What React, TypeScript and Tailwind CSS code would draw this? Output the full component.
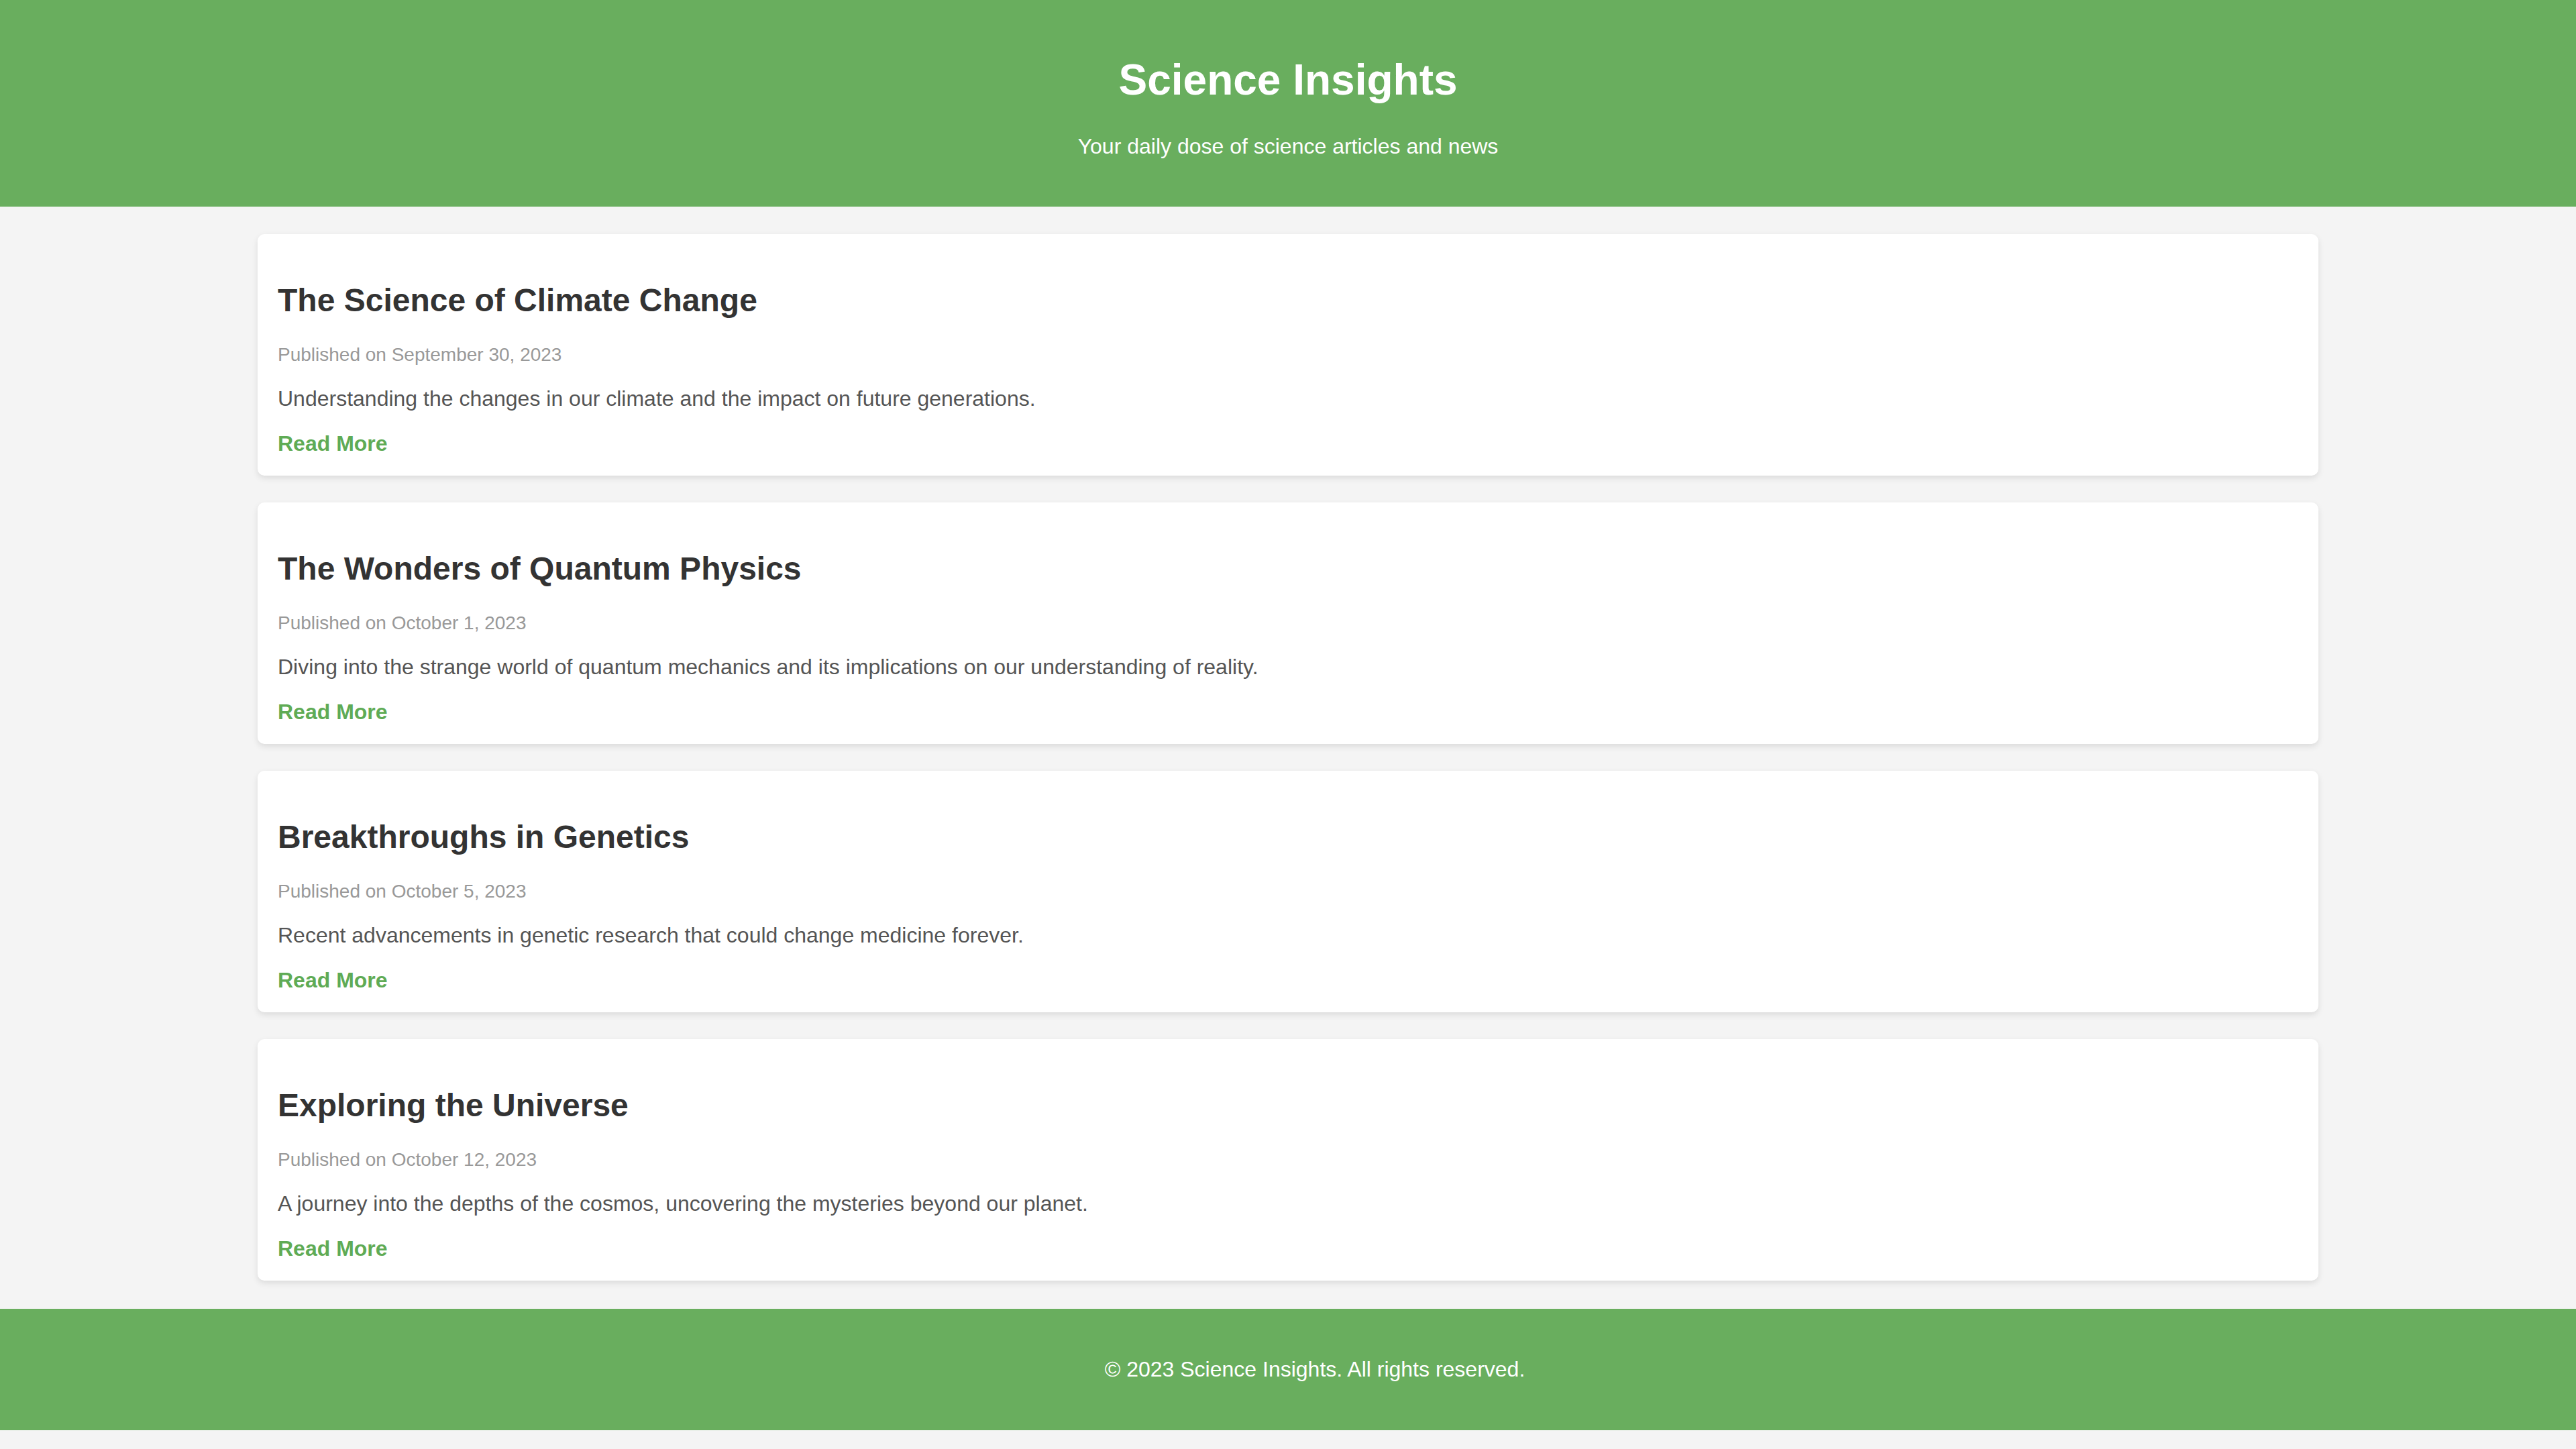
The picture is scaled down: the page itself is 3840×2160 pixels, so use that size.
const articles = [
  {
    title: "The Science of Climate Change",
    date: "September 30, 2023",
    summary: "Understanding the changes in our climate and the impact on future generations.",
  },
  {
    title: "The Wonders of Quantum Physics",
    date: "October 1, 2023",
    summary:
      "Diving into the strange world of quantum mechanics and its implications on our understanding of reality.",
  },
  {
    title: "Breakthroughs in Genetics",
    date: "October 5, 2023",
    summary: "Recent advancements in genetic research that could change medicine forever.",
  },
  {
    title: "Exploring the Universe",
    date: "October 12, 2023",
    summary: "A journey into the depths of the cosmos, uncovering the mysteries beyond our planet.",
  },
];

export default function App() {
  return (
    <div className="min-h-screen bg-[#f4f4f4] font-['Liberation_Sans',Arial,sans-serif]">
      <header className="flex flex-col items-center bg-[#69ae5e] pt-[82px] pb-[71px] text-white">
        <h1 className="text-[64px] leading-[74px] font-bold">Science Insights</h1>
        <p className="mt-[44px] text-[32px] leading-[37px]">
          Your daily dose of science articles and news
        </p>
      </header>

      <main className="mx-auto flex w-[80%] flex-col gap-[40px] pt-[41px] pb-[42px]">
        {articles.map((article, index) => (
          <article
            key={index}
            className="flex h-[360px] flex-col items-start rounded-[10px] bg-white px-[30px] pt-[71px] shadow-[0_4px_10px_rgba(0,0,0,0.1)]"
          >
            <h2 className="text-[48px] leading-[55px] font-bold text-[#333]">{article.title}</h2>
            <p className="mt-[38px] text-[28px] leading-[32px] text-[#999]">
              Published on {article.date}
            </p>
            <p className="mt-[31px] text-[32px] leading-[37px] text-[#555]">{article.summary}</p>
            <a href="#" className="mt-[30px] text-[32px] leading-[37px] font-bold text-[#5fab55]">
              Read More
            </a>
          </article>
        ))}
      </main>

      <footer className="bg-[#69ae5e] py-[72px] pl-[80px] text-center text-[32px] leading-[37px] text-white">
        <p>&copy; 2023 Science Insights. All rights reserved.</p>
      </footer>
    </div>
  );
}
